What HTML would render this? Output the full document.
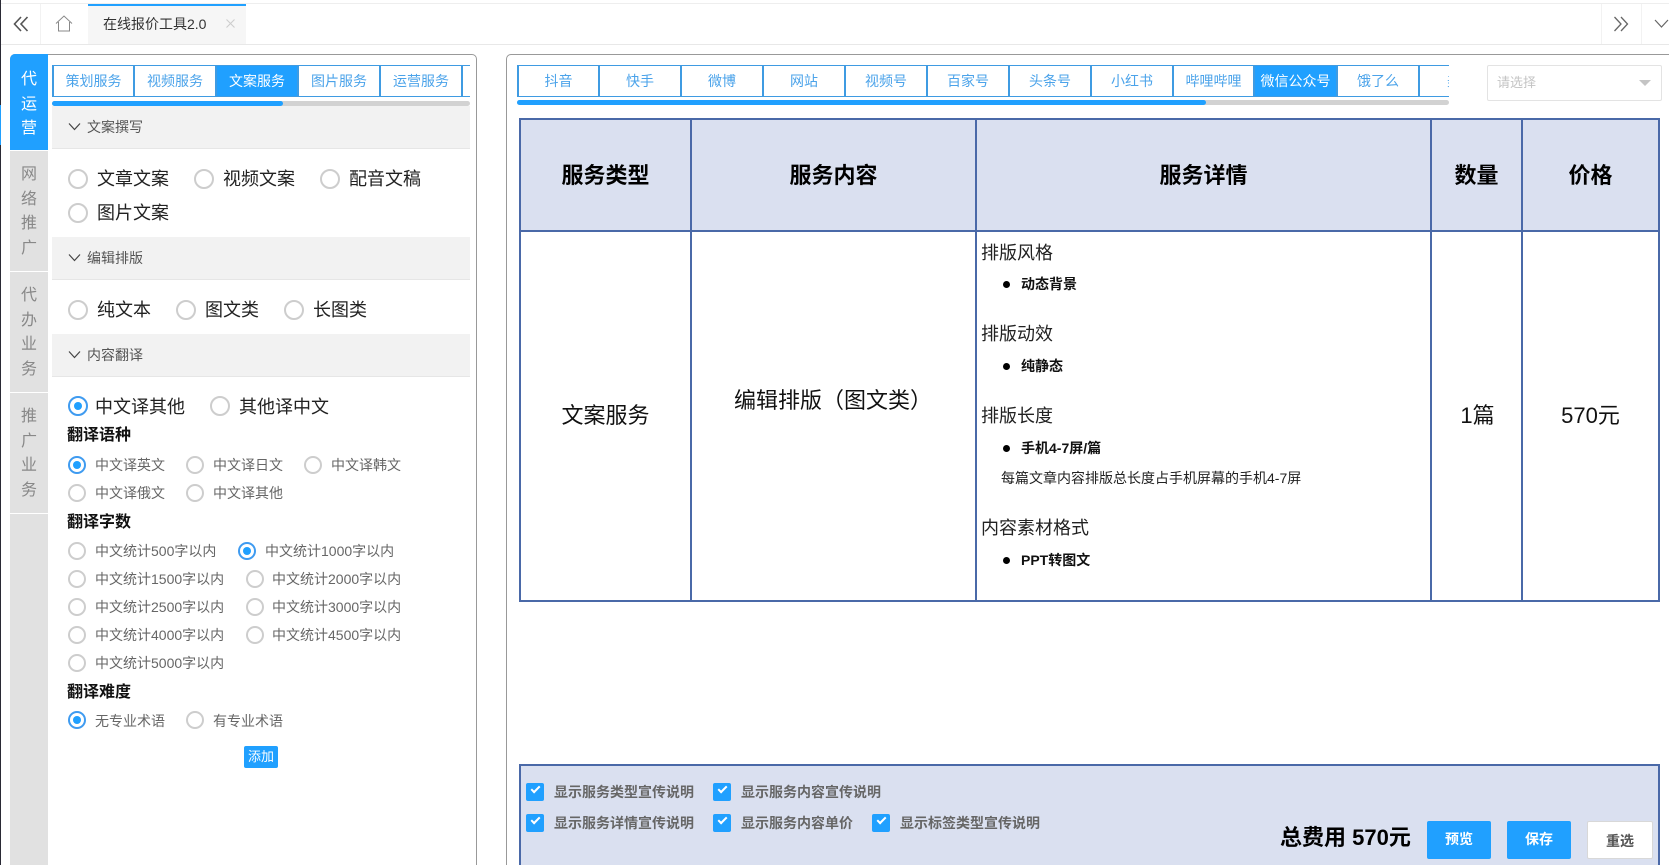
<!DOCTYPE html>
<html lang="zh"><head><meta charset="utf-8"><title>在线报价工具2.0</title>
<style>
html,body{margin:0;padding:0;background:#fff;width:1669px;height:865px;overflow:hidden}
body{position:relative;font-family:"Liberation Sans","Noto Sans CJK SC",sans-serif;color:#333}
div,span,svg{position:absolute;box-sizing:border-box}
.t{white-space:nowrap;height:24px;line-height:24px}
.side{left:10px;width:38px;background:#e1e1e1;color:#888;font-size:16px;text-align:center;line-height:24.5px;border-bottom:1px solid #fff}
.tab{top:65px;height:32px;border:solid #3f9be2;border-width:1px 2px 1px 0;color:#4ba3ea;font-size:14px;text-align:center;line-height:30px;background:#fff;white-space:nowrap}
.tab.on{background:#20a0ff;color:#fff;border-color:#3f9be2}
.hd{left:52px;width:418px;height:43px;background:#f2f2f2;border-bottom:1px solid #e6e6e6}
.hd b{font-weight:400;position:absolute;left:35px;top:10px;font-size:14px;line-height:22px;color:#555;white-space:nowrap}
.hd svg{left:16px;top:16px}
.r{border:2px solid #cdcdcd;border-radius:50%;background:#fff}
.r.on{border-color:#3f9bf0}
.r.on:after{content:"";position:absolute;left:50%;top:50%;width:8px;height:8px;margin:-4px;border-radius:50%;background:#20a0ff}
.big{width:20px;height:20px}.sm{width:18px;height:18px}
.lb{font-size:18px;color:#222}.ls{font-size:14px;color:#666}
.h4{font-size:16px;font-weight:700;color:#111;left:67px}
.ln{background:#4a69a8}
.th{font-size:22px;font-weight:700;color:#000;text-align:center;height:32px;line-height:32px;top:160px;white-space:nowrap}
.td{font-size:22px;color:#111;text-align:center;height:32px;line-height:32px;white-space:nowrap}
.d1{left:981px;font-size:18px;color:#222}
.d2{left:1021px;font-size:14px;font-weight:700;color:#111}
.dot{left:1003px;width:7px;height:7px;background:#000;border-radius:50%}
.ck{width:18px;height:18px;background:#20a0ff;border-radius:2px}
.ck:after{content:"";position:absolute;left:5px;top:3px;width:9px;height:5px;border:solid #fff;border-width:0 0 2px 2px;transform:rotate(-45deg);box-sizing:border-box}
.cl{font-size:14px;font-weight:700;color:#666}
.btn{top:821px;height:38px;width:64px;background:#20a0ff;color:#fff;border-radius:2px;font-size:14px;font-weight:700;text-align:center;line-height:36px}
</style></head><body>
<div style="left:0;top:0;width:1px;height:865px;background:#2a2a35"></div>
<div style="left:0;top:105px;width:1px;height:40px;background:#20a0ff"></div>
<div style="left:1px;top:3px;width:1668px;height:1px;background:#eee"></div>
<div style="left:1px;top:44px;width:1668px;height:1px;background:#e8e8e8"></div>
<div style="left:40px;top:4px;width:1px;height:40px;background:#f2f2f2"></div>
<div style="left:1601px;top:4px;width:1px;height:40px;background:#f2f2f2"></div>
<div style="left:1641px;top:4px;width:1px;height:40px;background:#f2f2f2"></div>
<svg style="left:13px;top:15px" width="16" height="18" viewBox="0 0 16 18" fill="none" stroke="#555" stroke-width="1.6"><path d="M8 2 1.5 9 8 16M14.5 2 8 9l6.5 7"/></svg>
<svg style="left:55px;top:15px" width="18" height="17" viewBox="0 0 18 17" fill="none" stroke="#888" stroke-width="1"><path d="M1 8.5 9 1l8 7.5M3.5 7v9h11V7"/></svg>
<div style="left:88px;top:4px;width:158px;height:40px;background:#f6f6f6;border-top:2px solid #20a0ff"></div>
<div class="t" style="left:103px;top:12px;font-size:14px;color:#333">在线报价工具2.0</div>
<svg style="left:226px;top:19px" width="9" height="9" viewBox="0 0 9 9" stroke="#ccc" stroke-width="1"><path d="M.5.5l8 8M8.500.5l-8 8"/></svg>
<svg style="left:1613px;top:15px" width="16" height="18" viewBox="0 0 16 18" fill="none" stroke="#666" stroke-width="1.3"><path d="M1.500 2 8 9l-6.500 7M8 2l6.500 7L8 16"/></svg>
<svg style="left:1654px;top:18px" width="15" height="11" viewBox="0 0 15 11" fill="none" stroke="#666" stroke-width="1.2"><path d="M1 2l6.500 7L14 2"/></svg>

<!-- left panel -->
<div style="left:10px;top:54px;width:467px;height:830px;border:1px solid #999;border-radius:5px;background:#fff"></div>
<div style="left:10px;top:60px;width:38px;height:805px;background:#e1e1e1"></div>
<div class="side" style="top:54px;height:97px;background:#20a0ff;color:#fff;padding-top:14px;border-radius:5px 0 0 0">代<br>运<br>营</div>
<div class="side" style="top:151px;height:121px;padding-top:12px">网<br>络<br>推<br>广</div>
<div class="side" style="top:272px;height:121px;padding-top:12px">代<br>办<br>业<br>务</div>
<div class="side" style="top:393px;height:121px;padding-top:12px">推<br>广<br>业<br>务</div>

<div style="left:52px;top:65px;width:418px;height:32px;overflow:hidden">
<div class="tab" style="top:0;left:0;width:83px;border-left-width:2px">策划服务</div>
<div class="tab" style="top:0;left:83px;width:82px">视频服务</div>
<div class="tab on" style="top:0;left:165px;width:82px">文案服务</div>
<div class="tab" style="top:0;left:247px;width:82px">图片服务</div>
<div class="tab" style="top:0;left:329px;width:82px">运营服务</div>
<div class="tab" style="top:0;left:411px;width:20px;border-right:0"></div>
</div>
<div style="left:52px;top:101px;width:418px;height:5px;background:#d2d2d2;border-radius:3px"></div>
<div style="left:52px;top:101px;width:231px;height:5px;background:#20a0ff;border-radius:3px"></div>

<div class="hd" style="top:106px"><svg width="13" height="9" viewBox="0 0 13 9" fill="none" stroke="#444" stroke-width="1.200"><path d="M1 1.500l5.500 6 5.500-6"/></svg><b>文案撰写</b></div>
<div class="r big" style="left:68px;top:169px"></div><div class="t lb" style="left:97px;top:167px">文章文案</div>
<div class="r big" style="left:194px;top:169px"></div><div class="t lb" style="left:223px;top:167px">视频文案</div>
<div class="r big" style="left:320px;top:169px"></div><div class="t lb" style="left:349px;top:167px">配音文稿</div>
<div class="r big" style="left:68px;top:203px"></div><div class="t lb" style="left:97px;top:201px">图片文案</div>

<div class="hd" style="top:237px"><svg width="13" height="9" viewBox="0 0 13 9" fill="none" stroke="#444" stroke-width="1.200"><path d="M1 1.500l5.500 6 5.500-6"/></svg><b>编辑排版</b></div>
<div class="r big" style="left:68px;top:300px"></div><div class="t lb" style="left:97px;top:298px">纯文本</div>
<div class="r big" style="left:176px;top:300px"></div><div class="t lb" style="left:205px;top:298px">图文类</div>
<div class="r big" style="left:284px;top:300px"></div><div class="t lb" style="left:313px;top:298px">长图类</div>

<div class="hd" style="top:334px"><svg width="13" height="9" viewBox="0 0 13 9" fill="none" stroke="#444" stroke-width="1.200"><path d="M1 1.500l5.500 6 5.500-6"/></svg><b>内容翻译</b></div>
<div class="r big on" style="left:68px;top:396px"></div><div class="t lb" style="left:95px;top:395px">中文译其他</div>
<div class="r big" style="left:210px;top:396px"></div><div class="t lb" style="left:239px;top:395px">其他译中文</div>

<div class="t h4" style="top:424px">翻译语种</div>
<div class="r sm on" style="left:68px;top:456px"></div><div class="t ls" style="left:95px;top:453px">中文译英文</div>
<div class="r sm" style="left:186px;top:456px"></div><div class="t ls" style="left:213px;top:453px">中文译日文</div>
<div class="r sm" style="left:304px;top:456px"></div><div class="t ls" style="left:331px;top:453px">中文译韩文</div>
<div class="r sm" style="left:68px;top:484px"></div><div class="t ls" style="left:95px;top:481px">中文译俄文</div>
<div class="r sm" style="left:186px;top:484px"></div><div class="t ls" style="left:213px;top:481px">中文译其他</div>

<div class="t h4" style="top:511px">翻译字数</div>
<div class="r sm" style="left:68px;top:542px"></div><div class="t ls" style="left:95px;top:539px">中文统计500字以内</div>
<div class="r sm on" style="left:238px;top:542px"></div><div class="t ls" style="left:265px;top:539px">中文统计1000字以内</div>
<div class="r sm" style="left:68px;top:570px"></div><div class="t ls" style="left:95px;top:567px">中文统计1500字以内</div>
<div class="r sm" style="left:246px;top:570px"></div><div class="t ls" style="left:272px;top:567px">中文统计2000字以内</div>
<div class="r sm" style="left:68px;top:598px"></div><div class="t ls" style="left:95px;top:595px">中文统计2500字以内</div>
<div class="r sm" style="left:246px;top:598px"></div><div class="t ls" style="left:272px;top:595px">中文统计3000字以内</div>
<div class="r sm" style="left:68px;top:626px"></div><div class="t ls" style="left:95px;top:623px">中文统计4000字以内</div>
<div class="r sm" style="left:246px;top:626px"></div><div class="t ls" style="left:272px;top:623px">中文统计4500字以内</div>
<div class="r sm" style="left:68px;top:654px"></div><div class="t ls" style="left:95px;top:651px">中文统计5000字以内</div>

<div class="t h4" style="top:681px">翻译难度</div>
<div class="r sm on" style="left:68px;top:711px"></div><div class="t ls" style="left:95px;top:709px">无专业术语</div>
<div class="r sm" style="left:186px;top:711px"></div><div class="t ls" style="left:213px;top:709px">有专业术语</div>
<div style="left:244px;top:746px;width:34px;height:22px;background:#20a0ff;color:#fff;border-radius:2px;font-size:13px;line-height:22px;text-align:center">添加</div>

<!-- right panel -->
<div style="left:506px;top:54px;width:1200px;height:830px;border:1px solid #999;border-radius:5px;background:#fff"></div>
<div style="left:517px;top:65px;width:932px;height:32px;overflow:hidden">
<div class="tab" style="top:0;left:0;width:83px;border-left-width:2px">抖音</div>
<div class="tab" style="top:0;left:83px;width:82px">快手</div>
<div class="tab" style="top:0;left:165px;width:82px">微博</div>
<div class="tab" style="top:0;left:247px;width:82px">网站</div>
<div class="tab" style="top:0;left:329px;width:82px">视频号</div>
<div class="tab" style="top:0;left:411px;width:82px">百家号</div>
<div class="tab" style="top:0;left:493px;width:82px">头条号</div>
<div class="tab" style="top:0;left:575px;width:82px">小红书</div>
<div class="tab" style="top:0;left:657px;width:81px">哔哩哔哩</div>
<div class="tab on" style="top:0;left:738px;width:83px">微信公众号</div>
<div class="tab" style="top:0;left:821px;width:82px">饿了么</div>
<div class="tab" style="top:0;left:903px;width:82px;border-right:0">美团</div>
</div>
<div style="left:517px;top:100px;width:932px;height:5px;background:#d2d2d2;border-radius:3px"></div>
<div style="left:517px;top:100px;width:689px;height:5px;background:#20a0ff;border-radius:3px"></div>
<div style="left:1487px;top:65px;width:175px;height:36px;border:1px solid #e3e3e3;border-radius:2px;background:#fff"></div>
<div class="t" style="left:1497px;top:71px;font-size:13px;color:#c4c4c4">请选择</div>
<div style="left:1639px;top:80px;width:0;height:0;border:6px solid transparent;border-top:6px solid #c4c4c4;border-bottom:0"></div>

<!-- table -->
<div style="left:520px;top:118px;width:1139px;height:113px;background:#dae0f0"></div>
<div class="ln" style="left:519px;top:118px;width:1141px;height:2px"></div>
<div class="ln" style="left:519px;top:230px;width:1141px;height:2px"></div>
<div class="ln" style="left:519px;top:600px;width:1141px;height:2px"></div>
<div class="ln" style="left:519px;top:118px;width:2px;height:484px"></div>
<div class="ln" style="left:690px;top:118px;width:2px;height:484px"></div>
<div class="ln" style="left:975px;top:118px;width:2px;height:484px"></div>
<div class="ln" style="left:1430px;top:118px;width:2px;height:484px"></div>
<div class="ln" style="left:1521px;top:118px;width:2px;height:484px"></div>
<div class="ln" style="left:1658px;top:118px;width:2px;height:484px"></div>
<div class="th" style="left:520px;width:171px">服务类型</div>
<div class="th" style="left:691px;width:285px">服务内容</div>
<div class="th" style="left:976px;width:455px">服务详情</div>
<div class="th" style="left:1431px;width:91px">数量</div>
<div class="th" style="left:1522px;width:137px">价格</div>
<div class="td" style="left:520px;width:171px;top:400px">文案服务</div>
<div class="td" style="left:734px;top:385px">编辑排版（图文类）</div>
<div class="td" style="left:1432px;width:91px;top:400px">1篇</div>
<div class="td" style="left:1522px;width:137px;top:400px">570元</div>

<div class="t d1" style="top:241px">排版风格</div><div class="dot" style="top:281px"></div><div class="t d2" style="top:272px">动态背景</div>
<div class="t d1" style="top:322px">排版动效</div><div class="dot" style="top:363px"></div><div class="t d2" style="top:354px">纯静态</div>
<div class="t d1" style="top:404px">排版长度</div><div class="dot" style="top:445px"></div><div class="t d2" style="top:436px">手机4-7屏/篇</div>
<div class="t" style="left:1001px;top:466px;font-size:14px;color:#222">每篇文章内容排版总长度占手机屏幕的手机4-7屏</div>
<div class="t d1" style="top:516px">内容素材格式</div><div class="dot" style="top:557px"></div><div class="t d2" style="top:548px">PPT转图文</div>

<!-- bottom -->
<div style="left:519px;top:764px;width:1141px;height:110px;background:#dae0f0;border:2px solid #4a69a8"></div>
<div class="ck" style="left:526px;top:783px"></div><div class="t cl" style="left:554px;top:780px">显示服务类型宣传说明</div>
<div class="ck" style="left:713px;top:783px"></div><div class="t cl" style="left:741px;top:780px">显示服务内容宣传说明</div>
<div class="ck" style="left:526px;top:814px"></div><div class="t cl" style="left:554px;top:811px">显示服务详情宣传说明</div>
<div class="ck" style="left:713px;top:814px"></div><div class="t cl" style="left:741px;top:811px">显示服务内容单价</div>
<div class="ck" style="left:872px;top:814px"></div><div class="t cl" style="left:900px;top:811px">显示标签类型宣传说明</div>
<div class="t" style="left:1280px;top:826px;font-size:22px;font-weight:700;color:#000">总费用 570元</div>
<div class="btn" style="left:1427px">预览</div>
<div class="btn" style="left:1507px">保存</div>
<div class="btn" style="left:1587px;width:66px;background:#fff;color:#555;border:1px solid #d8d8d8;line-height:38px">重选</div>
</body></html>
